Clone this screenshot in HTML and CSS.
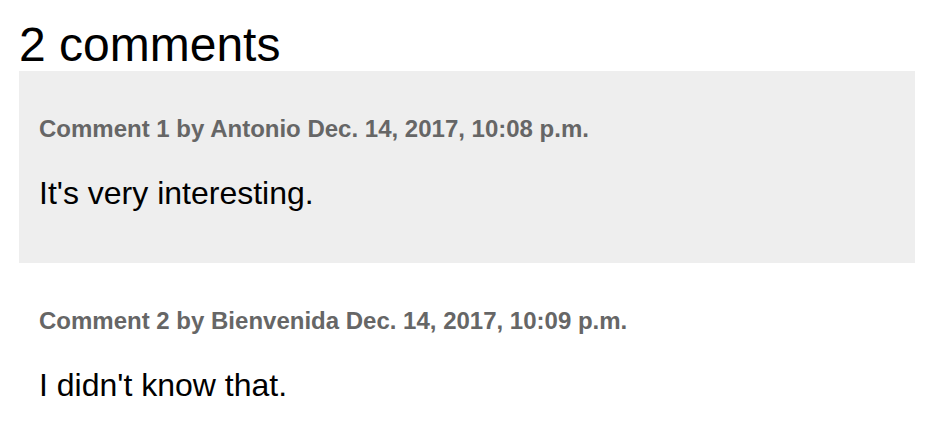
FILE: index.html
```html
<!DOCTYPE html>
<html lang="en">
<head>
<meta charset="utf-8">
<title>Comments</title>
<link rel="stylesheet" href="styles.css">
</head>
<body>
<h2 class="title">2 comments</h2>
<div class="comment alt">
  <p class="info">Comment 1 by Antonio Dec. 14, 2017, 10:08 p.m.</p>
  <p class="text">It's very interesting.</p>
</div>
<div class="comment">
  <p class="info">Comment 2 by Bienvenida Dec. 14, 2017, 10:09 p.m.</p>
  <p class="text">I didn't know that.</p>
</div>
</body>
</html>
```
FILE: styles.css
```css
html, body {
  background: #fff;
}
body {
  margin: 0;
  padding: 0 19px;
  font-family: "Liberation Sans", Arial, Helvetica, sans-serif;
  color: #000;
}
.title {
  font-size: 48px;
  font-weight: normal;
  line-height: 48px;
  margin: 21px 0 2px;
}
.comment {
  padding: 20px;
}
.comment.alt {
  background: #eeeeee;
}
.info {
  font-weight: bold;
  font-size: 24px;
  line-height: 28px;
  color: #666666;
  margin: 24px 0;
}
.text {
  font-size: 32px;
  line-height: 36px;
  margin: 32px 0;
}
```
